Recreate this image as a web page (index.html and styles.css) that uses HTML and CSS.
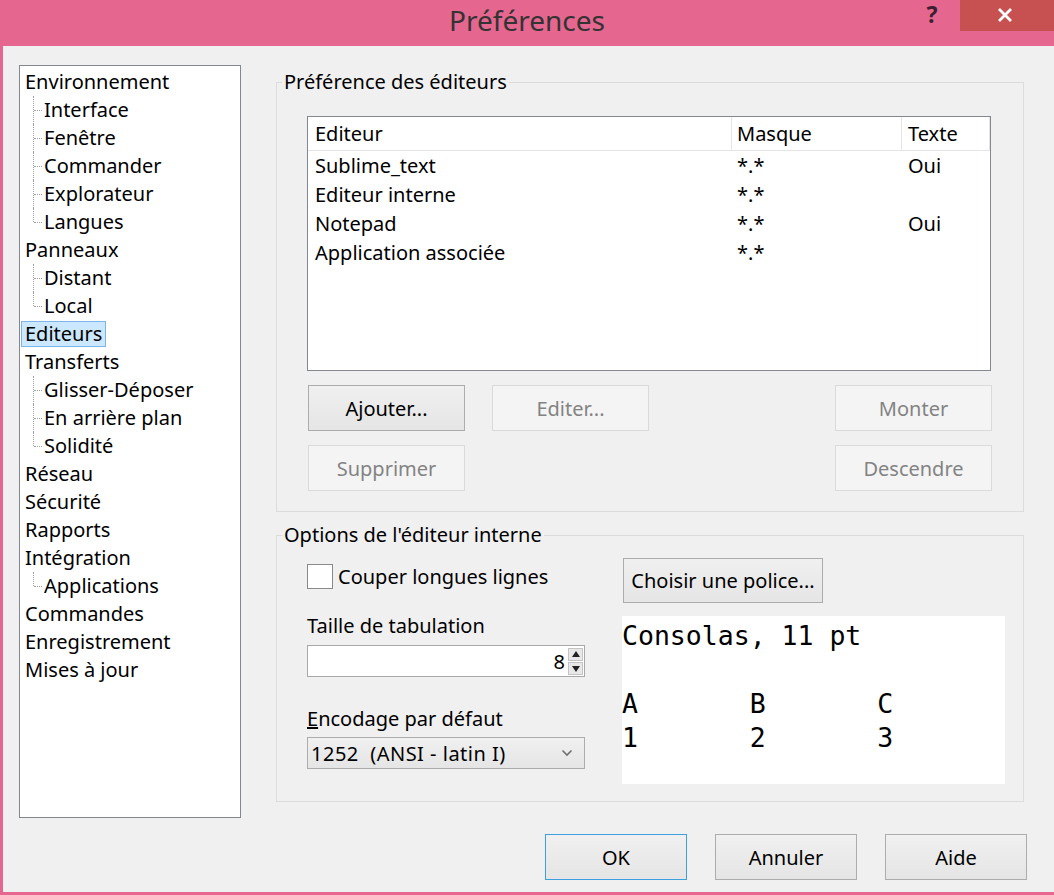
FILE: index.html
```html
<!DOCTYPE html>
<html lang="fr">
<head>
<meta charset="utf-8">
<title>Préférences</title>
<link rel="stylesheet" href="styles.css">
</head>
<body>
<div class="window">
  <div class="titlebar">
    <div></div>
    <div class="title">Préférences</div>
    <div class="controls">
      <div class="help">?</div>
      <div class="close">
        <svg width="16" height="14" viewBox="0 0 16 14"><path d="M2 1 L14 13 M14 1 L2 13" stroke="#fff" stroke-width="2.8" fill="none"/></svg>
      </div>
    </div>
  </div>
  <div class="content">
    <div class="main">
      <div class="tree">
        <div class="node"><span class="lbl">Environnement</span></div>
        <div class="kids">
          <div class="kid"><span class="lbl">Interface</span></div>
          <div class="kid"><span class="lbl">Fenêtre</span></div>
          <div class="kid"><span class="lbl">Commander</span></div>
          <div class="kid"><span class="lbl">Explorateur</span></div>
          <div class="kid"><span class="lbl">Langues</span></div>
        </div>
        <div class="node"><span class="lbl">Panneaux</span></div>
        <div class="kids">
          <div class="kid"><span class="lbl">Distant</span></div>
          <div class="kid"><span class="lbl">Local</span></div>
        </div>
        <div class="node"><span class="lbl selected">Editeurs</span></div>
        <div class="node"><span class="lbl">Transferts</span></div>
        <div class="kids">
          <div class="kid"><span class="lbl">Glisser-Déposer</span></div>
          <div class="kid"><span class="lbl">En arrière plan</span></div>
          <div class="kid"><span class="lbl">Solidité</span></div>
        </div>
        <div class="node"><span class="lbl">Réseau</span></div>
        <div class="node"><span class="lbl">Sécurité</span></div>
        <div class="node"><span class="lbl">Rapports</span></div>
        <div class="node"><span class="lbl">Intégration</span></div>
        <div class="kids">
          <div class="kid"><span class="lbl">Applications</span></div>
        </div>
        <div class="node"><span class="lbl">Commandes</span></div>
        <div class="node"><span class="lbl">Enregistrement</span></div>
        <div class="node"><span class="lbl">Mises à jour</span></div>
      </div>

      <div class="right">
        <fieldset class="group group1">
          <legend>Préférence des éditeurs</legend>
          <div class="list">
            <div class="lrow lhead">
              <div class="c1">Editeur</div><div class="c2">Masque</div><div class="c3">Texte</div><div class="c4"></div>
            </div>
            <div class="lrow"><div class="c1">Sublime_text</div><div class="c2">*.*</div><div class="c3">Oui</div></div>
            <div class="lrow"><div class="c1">Editeur interne</div><div class="c2">*.*</div><div class="c3"></div></div>
            <div class="lrow"><div class="c1">Notepad</div><div class="c2">*.*</div><div class="c3">Oui</div></div>
            <div class="lrow"><div class="c1">Application associée</div><div class="c2">*.*</div><div class="c3"></div></div>
          </div>
          <div class="btnrow">
            <div class="btngroup">
              <button class="btn">Ajouter...</button>
              <button class="btn" disabled>Editer...</button>
            </div>
            <button class="btn" disabled>Monter</button>
          </div>
          <div class="btnrow second">
            <button class="btn" disabled>Supprimer</button>
            <button class="btn" disabled>Descendre</button>
          </div>
        </fieldset>

        <fieldset class="group group2">
          <legend>Options de l'éditeur interne</legend>
          <div class="opts">
            <div class="optleft">
              <div class="check"><span class="box"></span><span>Couper longues lignes</span></div>
              <div class="label l1">Taille de tabulation</div>
              <div class="spin">
                <span class="spinval">8</span>
                <span class="arrows">
                  <span class="arr up"></span>
                  <span class="arr down"></span>
                </span>
              </div>
              <div class="label l2"><u>E</u>ncodage par défaut</div>
              <div class="select">
                <span class="selval">1252  (ANSI - latin I)</span>
                <svg width="12" height="8" viewBox="0 0 12 8"><path d="M1.5 1.5 L6 6 L10.5 1.5" stroke="#707070" stroke-width="1.6" fill="none"/></svg>
              </div>
            </div>
            <div class="optright">
              <button class="btn fontbtn">Choisir une police...</button>
              <div class="preview">Consolas, 11 pt

A	B	C
1	2	3</div>
            </div>
          </div>
        </fieldset>
      </div>
    </div>
    <div class="footer">
      <button class="btn fbtn default">OK</button>
      <button class="btn fbtn">Annuler</button>
      <button class="btn fbtn">Aide</button>
    </div>
  </div>
</div>
</body>
</html>
```

FILE: styles.css
```css
* { box-sizing: border-box; }
html, body { margin: 0; padding: 0; }
body {
  width: 1054px;
  height: 895px;
  overflow: hidden;
  background: #e5668f;
  font-family: "Noto Sans", "Open Sans", sans-serif;
  font-size: 20px;
  color: #000;
}
.window {
  display: flex;
  flex-direction: column;
  height: 895px;
}
.titlebar {
  height: 46px;
  display: grid;
  grid-template-columns: 1fr auto 1fr;
  align-items: start;
}
.title {
  font-size: 28px;
  line-height: 40px;
  color: #333;
  padding-top: 0;
}
.controls {
  display: flex;
  justify-content: flex-end;
  align-items: flex-start;
}
.help {
  width: 40px;
  text-align: center;
  font-size: 23px;
  font-weight: bold;
  line-height: 34px;
  margin-top: -3px;
  color: #3a2030;
  margin-right: 8px;
}
.close {
  width: 94px;
  height: 31px;
  background: #c75050;
  display: flex;
  align-items: center;
  justify-content: center;
  padding-right: 4px;
  padding-bottom: 2px;
}
.content {
  flex: 1;
  margin-left: 3px;
  margin-bottom: 3px;
  background: #f0f0f0;
  display: flex;
  flex-direction: column;
}
.main {
  display: flex;
  align-items: flex-start;
}

/* Tree */
.tree {
  margin-top: 19px;
  margin-left: 16px;
  width: 222px;
  height: 753px;
  background: #fff;
  border: 1px solid #828790;
  padding-top: 2px;
}
.node, .kid {
  height: 28px;
  display: flex;
  align-items: center;
  position: relative;
}
.kid { padding-left: 19px; }
.lbl {
  display: inline-block;
  line-height: 24px;
  border: 1px solid transparent;
  padding: 0 3px;
  margin-left: 1px;
  white-space: nowrap;
}
.lbl.selected {
  background: #cce8ff;
  border-color: #7eb4ea;
}
.kid::before {
  content: "";
  position: absolute;
  left: 13px;
  top: 0;
  bottom: 0;
  border-left: 1px dotted #a0a0a0;
}
.kid:last-child::before { bottom: 14px; }
.kid::after {
  content: "";
  position: absolute;
  left: 14px;
  top: 14px;
  width: 8px;
  border-top: 1px dotted #a0a0a0;
}

/* Right side */
.right {
  margin-left: 35px;
  margin-top: 24px;
  width: 748px;
}
.group {
  margin: 0;
  border: 1px solid #dcdcdc;
  min-width: 0;
}
.group legend {
  padding: 0 2px;
  margin-left: -25px;
  line-height: 24px;
}
.group1 { padding: 22px 32px 20px 30px; }
.group2 { margin-top: 11px; padding: 11px 18px 17px 30px; }

.list {
  width: 684px;
  height: 255px;
  background: #fff;
  border: 1px solid #828790;
}
.lrow {
  display: flex;
  height: 29px;
  align-items: center;
}
.lrow.lhead {
  height: 34px;
  border-bottom: 1px solid #e5e5e5;
  align-items: stretch;
}
.lhead > div {
  display: flex;
  align-items: center;
  border-right: 1px solid #e5e5e5;
}
.c1 { width: 424px; padding-left: 7px; }
.c2 { width: 170px; padding-left: 5px; }
.c3 { width: 88px; padding-left: 6px; }
.lhead .c4 { border-right: none; flex: 1; }

.btnrow {
  display: flex;
  justify-content: space-between;
  width: 685px;
  padding-left: 1px;
  margin-top: 14px;
}
.btnrow.second { margin-top: 14px; }
.btngroup { display: flex; gap: 27px; }
.btn {
  font-family: inherit;
  font-size: 20px;
  color: #000;
  width: 157px;
  height: 46px;
  padding: 0;
  margin: 0;
  border: 1px solid #acacac;
  background: linear-gradient(#f0f0f0, #e5e5e5);
  border-radius: 0;
}
.btn:disabled {
  color: #838383;
  background: #f4f4f4;
  border-color: #dadada;
}

/* Group 2 */
.opts {
  display: flex;
  align-items: flex-start;
  gap: 37px;
}
.optleft {
  width: 278px;
  padding-top: 6px;
  display: flex;
  flex-direction: column;
}
.check {
  display: flex;
  align-items: center;
  height: 25px;
  gap: 5px;
}
.box {
  width: 26px;
  height: 25px;
  background: #fff;
  border: 1px solid #8a8a8a;
}
.label { line-height: 28px; }
.label.l1 { margin-top: 23px; }
.label.l2 { margin-top: 28px; }
.spin {
  margin-top: 5px;
  height: 32px;
  background: #fff;
  border: 1px solid #a8a8a8;
  display: flex;
  justify-content: flex-end;
  align-items: center;
  padding-right: 1px;
}
.spinval { margin-right: 3px; }
.arrows {
  display: flex;
  flex-direction: column;
  gap: 1px;
}
.arr {
  width: 15px;
  height: 13px;
  background: #e8e8e8;
  border: 1px solid #c4c4c4;
  position: relative;
}
.arr::after {
  content: "";
  position: absolute;
  left: 3px;
  border-left: 4px solid transparent;
  border-right: 4px solid transparent;
}
.arr.up::after { top: 2px; border-bottom: 6px solid #222; }
.arr.down::after { top: 3px; border-top: 6px solid #222; }
.select {
  margin-top: 4px;
  height: 32px;
  border: 1px solid #acacac;
  background: linear-gradient(#f0f0f0, #e5e5e5);
  display: flex;
  align-items: center;
  justify-content: space-between;
  padding: 0 11px 0 3px;
}
.selval { white-space: pre; letter-spacing: 0.5px; }

.optright {
  display: flex;
  flex-direction: column;
  align-items: flex-start;
}
.fontbtn {
  width: 200px;
  height: 45px;
  margin-left: 1px;
}
.preview {
  margin-top: 13px;
  width: 383px;
  height: 168px;
  background: #fff;
  font-family: "DejaVu Sans Mono", "Liberation Mono", monospace;
  font-size: 26.5px;
  line-height: 34px;
  white-space: pre;
  tab-size: 8;
  padding-top: 3px;
}

/* Footer */
.footer {
  display: flex;
  justify-content: flex-end;
  gap: 28px;
  margin-top: 16px;
  padding-right: 27px;
}
.fbtn { width: 142px; height: 46px; }
.fbtn.default { border-color: #3c9fe0; }
```
